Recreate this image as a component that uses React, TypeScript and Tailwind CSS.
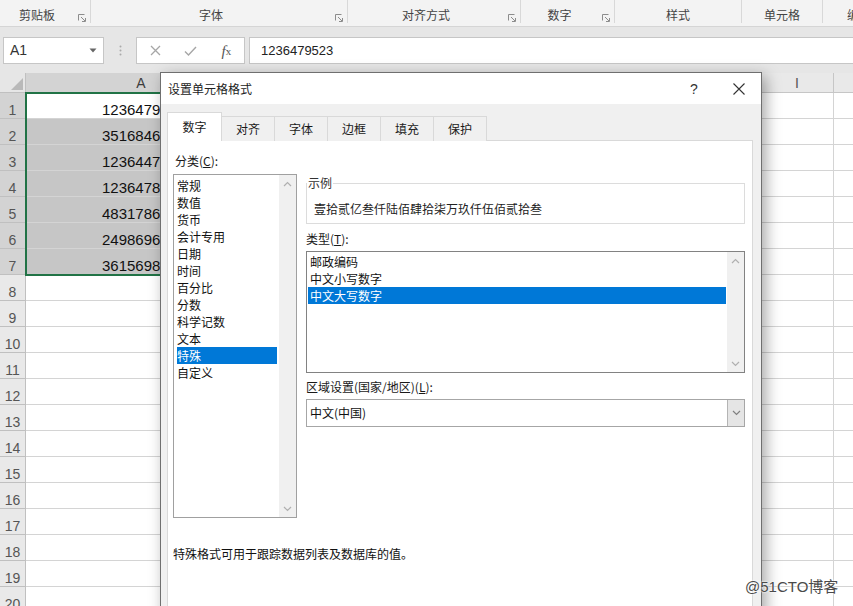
import React from "react";

const values = [
  "1236479523",
  "3516846523",
  "1236447952",
  "1236478952",
  "4831786523",
  "2498696712",
  "3615698523",
];

const categories = [
  "常规",
  "数值",
  "货币",
  "会计专用",
  "日期",
  "时间",
  "百分比",
  "分数",
  "科学记数",
  "文本",
  "特殊",
  "自定义",
];

const types = ["邮政编码", "中文小写数字", "中文大写数字"];

function Launcher() {
  return (
    <svg width="8" height="8" viewBox="0 0 8 8" className="block">
      <path d="M0.5 6.5V0.5H6.5" stroke="#8c8c8c" fill="none" strokeWidth="1" />
      <path d="M3 3L7 7" stroke="#8c8c8c" strokeWidth="1" />
      <path d="M4 7.5H7.5V4" stroke="#8c8c8c" fill="none" strokeWidth="1" />
    </svg>
  );
}

function ArrowUp() {
  return (
    <svg width="9" height="6" viewBox="0 0 9 6" className="block">
      <path d="M1 5L4.5 1.5L8 5" stroke="#b0b0b0" strokeWidth="1.2" fill="none" />
    </svg>
  );
}

function ArrowDown({ color = "#b0b0b0" }: { color?: string }) {
  return (
    <svg width="9" height="6" viewBox="0 0 9 6" className="block">
      <path d="M1 1L4.5 4.5L8 1" stroke={color} strokeWidth="1.2" fill="none" />
    </svg>
  );
}

function Scrollbar() {
  return (
    <div className="w-[17px] h-full bg-[#f0f0f0] flex flex-col justify-between items-center">
      <div className="h-[17px] flex items-center justify-center">
        <ArrowUp />
      </div>
      <div className="h-[17px] flex items-center justify-center">
        <ArrowDown />
      </div>
    </div>
  );
}

function GridRow({ n }: { n: number }) {
  const sel = n >= 1 && n <= 7;
  const v = sel ? values[n - 1] : "";
  const cellBg = n >= 2 && n <= 7 ? "bg-[#c6c6c6]" : "bg-white";
  return (
    <div className="flex h-[26px] shrink-0">
      <div
        className={
          "w-[26px] shrink-0 border-r border-b border-[#c0c0c0] flex items-end justify-center text-[14px] leading-[16px] text-[#555] font-['Liberation_Sans',sans-serif] " +
          (sel ? "bg-[#d3d3d3]" : "bg-[#e9e9e9]")
        }
      >
        {n}
      </div>
      <div
        className={
          "w-[231px] shrink-0 border-r border-b border-[#d4d4d4] flex items-end pl-[76px] text-[15px] leading-[16px] text-[#111] font-['Liberation_Sans',sans-serif] overflow-hidden whitespace-nowrap " +
          cellBg
        }
      >
        {v}
      </div>
      <div className="w-[72px] shrink-0 border-r border-b border-[#d4d4d4] bg-white" />
      <div className="w-[72px] shrink-0 border-r border-b border-[#d4d4d4] bg-white" />
      <div className="w-[72px] shrink-0 border-r border-b border-[#d4d4d4] bg-white" />
      <div className="w-[72px] shrink-0 border-r border-b border-[#d4d4d4] bg-white" />
      <div className="w-[72px] shrink-0 border-r border-b border-[#d4d4d4] bg-white" />
      <div className="w-[72px] shrink-0 border-r border-b border-[#d4d4d4] bg-white" />
      <div className="w-[72px] shrink-0 border-r border-b border-[#d4d4d4] bg-white" />
      <div className="w-[73px] shrink-0 border-r border-b border-[#d4d4d4] bg-white" />
      <div className="flex-1 border-b border-[#d4d4d4] bg-white" />
    </div>
  );
}

export default function App() {
  const rowNums = Array.from({ length: 20 }, (_, i) => i + 1);
  return (
    <div className="relative w-[853px] h-[606px] overflow-hidden bg-white font-['Noto_Sans_CJK_SC',sans-serif] flex flex-col">
      {/* Ribbon group labels */}
      <div className="h-[27px] shrink-0 bg-[#f3f3f3] border-b border-[#d5d5d5] flex items-start text-[12px] leading-[16px] text-[#444] whitespace-nowrap">
        <div className="w-[91px] h-[23px] shrink-0 border-r border-[#d8d8d8] flex items-end">
          <div className="flex-1 text-center">剪贴板</div>
          <div className="w-[16px] pl-[4px] pb-[1px]">
            <Launcher />
          </div>
        </div>
        <div className="w-[257px] h-[23px] shrink-0 border-r border-[#d8d8d8] flex items-end">
          <div className="flex-1 text-center">字体</div>
          <div className="w-[16px] pl-[4px] pb-[1px]">
            <Launcher />
          </div>
        </div>
        <div className="w-[173px] h-[23px] shrink-0 border-r border-[#d8d8d8] flex items-end">
          <div className="flex-1 text-center">对齐方式</div>
          <div className="w-[16px] pl-[4px] pb-[1px]">
            <Launcher />
          </div>
        </div>
        <div className="w-[94px] h-[23px] shrink-0 border-r border-[#d8d8d8] flex items-end">
          <div className="flex-1 text-center">数字</div>
          <div className="w-[16px] pl-[4px] pb-[1px]">
            <Launcher />
          </div>
        </div>
        <div className="w-[127px] h-[23px] shrink-0 border-r border-[#d8d8d8] flex items-end justify-center">
          样式
        </div>
        <div className="w-[81px] h-[23px] shrink-0 border-r border-[#d8d8d8] flex items-end justify-center">
          单元格
        </div>
        <div className="flex-1 h-[23px] flex items-end pl-[24px]">编辑</div>
      </div>

      {/* Formula bar */}
      <div className="h-[46px] shrink-0 bg-[#e6e6e6] flex items-start pt-[10px]">
        <div className="ml-[3px] w-[101px] h-[27px] bg-white border border-[#c6c6c6] flex items-center justify-between pl-[6px] pr-[6px]">
          <span className="text-[14px] text-[#333] font-['Liberation_Sans',sans-serif]">A1</span>
          <svg width="8" height="5" viewBox="0 0 8 5" className="block">
            <path d="M0.5 0.5H7.5L4 4.5Z" fill="#666" />
          </svg>
        </div>
        <div className="w-[32px] h-[27px] flex items-center justify-center">
          <svg width="3" height="11" viewBox="0 0 3 11" className="block">
            <circle cx="1.5" cy="1.5" r="1" fill="#aaa" />
            <circle cx="1.5" cy="5.5" r="1" fill="#aaa" />
            <circle cx="1.5" cy="9.5" r="1" fill="#aaa" />
          </svg>
        </div>
        <div className="w-[109px] h-[27px] bg-white border border-[#c6c6c6] flex items-center pl-[1px]">
          <div className="w-[36px] flex justify-center">
            <svg width="11" height="11" viewBox="0 0 11 11" className="block">
              <path d="M1 1L10 10M10 1L1 10" stroke="#a6a6a6" strokeWidth="1.3" />
            </svg>
          </div>
          <div className="w-[36px] flex justify-center">
            <svg width="13" height="10" viewBox="0 0 13 10" className="block">
              <path d="M1 5.5L4.5 9L12 1" stroke="#a6a6a6" strokeWidth="1.4" fill="none" />
            </svg>
          </div>
          <div className="w-[36px] flex justify-center text-[#555] italic font-['Liberation_Serif',serif] text-[15px] leading-[16px]">
            f<span className="text-[11px] not-italic font-['Liberation_Serif',serif] italic">x</span>
          </div>
        </div>
        <div className="ml-[4px] flex-1 h-[27px] bg-white border-y border-l border-[#c6c6c6] flex items-center pl-[11px] text-[13px] text-[#222] font-['Liberation_Sans',sans-serif]">
          1236479523
        </div>
      </div>

      {/* Grid */}
      <div className="relative flex-1 flex flex-col">
        <div className="flex h-[20px] shrink-0 text-[14px] leading-[16px] text-[#444] font-['Liberation_Sans',sans-serif]">
          <div className="w-[26px] shrink-0 bg-[#e6e6e6] border-r border-b border-[#c0c0c0] flex items-end justify-end pr-[2px] pb-[2px]">
            <svg width="12" height="12" viewBox="0 0 12 12" className="block">
              <path d="M12 0V12H0Z" fill="#b9b9b9" />
            </svg>
          </div>
          <div className="w-[231px] shrink-0 bg-[#d3d3d3] border-r border-b border-[#bdbdbd] flex items-end justify-center pb-[1px] text-[#3d3d3d]">
            A
          </div>
          <div className="w-[72px] shrink-0 bg-[#e9e9e9] border-r border-b border-[#c6c6c6] flex items-end justify-center pb-[1px]">B</div>
          <div className="w-[72px] shrink-0 bg-[#e9e9e9] border-r border-b border-[#c6c6c6] flex items-end justify-center pb-[1px]">C</div>
          <div className="w-[72px] shrink-0 bg-[#e9e9e9] border-r border-b border-[#c6c6c6] flex items-end justify-center pb-[1px]">D</div>
          <div className="w-[72px] shrink-0 bg-[#e9e9e9] border-r border-b border-[#c6c6c6] flex items-end justify-center pb-[1px]">E</div>
          <div className="w-[72px] shrink-0 bg-[#e9e9e9] border-r border-b border-[#c6c6c6] flex items-end justify-center pb-[1px]">F</div>
          <div className="w-[72px] shrink-0 bg-[#e9e9e9] border-r border-b border-[#c6c6c6] flex items-end justify-center pb-[1px]">G</div>
          <div className="w-[72px] shrink-0 bg-[#e9e9e9] border-r border-b border-[#c6c6c6] flex items-end justify-center pb-[1px]">H</div>
          <div className="w-[73px] shrink-0 bg-[#e9e9e9] border-r border-b border-[#c6c6c6] flex items-end justify-center pb-[1px] text-[#555]">I</div>
          <div className="flex-1 bg-[#e9e9e9] border-b border-[#c6c6c6]" />
        </div>
        {rowNums.map((n) => (
          <GridRow key={n} n={n} />
        ))}
        {/* selection border */}
        <div className="absolute left-[25px] top-[19px] w-[234px] h-[184px] border-2 border-[#217346] pointer-events-none" />
      </div>

      {/* Dialog */}
      <div className="absolute left-[160px] top-[72px] w-[602px] h-[545px] border border-[#6f6f6f] bg-[#f0f0f0] shadow-[4px_4px_14px_rgba(0,0,0,0.35)] flex flex-col text-[12px] text-[#1a1a1a]">
        <div className="h-[31px] shrink-0 bg-white flex items-center pl-[7px] leading-[16px]">
          <span className="text-[#222]">设置单元格格式</span>
          <div className="ml-auto flex items-center mr-[12px]">
            <span className="w-[20px] text-center text-[14px] text-[#333] font-['Liberation_Sans',sans-serif]">?</span>
            <div className="w-[20px] ml-[25px] flex justify-center">
              <svg width="12" height="12" viewBox="0 0 12 12" className="block">
                <path d="M0.5 0.5L11.5 11.5M11.5 0.5L0.5 11.5" stroke="#333" strokeWidth="1.1" />
              </svg>
            </div>
          </div>
        </div>
        <div className="flex-1 flex flex-col px-[6px] pt-[8px]">
          {/* tabs */}
          <div className="flex items-end h-[29px] shrink-0 relative z-10 leading-[16px]">
            <div className="w-[55px] h-[29px] bg-white border border-[#d9d9d9] border-b-0 flex items-center justify-center">数字</div>
            <div className="w-[53px] h-[25px] bg-[#f0f0f0] border-t border-r border-[#d9d9d9] flex items-center justify-center">对齐</div>
            <div className="w-[53px] h-[25px] bg-[#f0f0f0] border-t border-r border-[#d9d9d9] flex items-center justify-center">字体</div>
            <div className="w-[53px] h-[25px] bg-[#f0f0f0] border-t border-r border-[#d9d9d9] flex items-center justify-center">边框</div>
            <div className="w-[53px] h-[25px] bg-[#f0f0f0] border-t border-r border-[#d9d9d9] flex items-center justify-center">填充</div>
            <div className="w-[53px] h-[25px] bg-[#f0f0f0] border-t border-r border-[#d9d9d9] flex items-center justify-center">保护</div>
          </div>
          {/* panel */}
          <div className="-mt-px w-[586px] flex-1 bg-white border border-[#d9d9d9] px-[5px] pt-[11px] leading-[17px]">
            <div className="flex">
              {/* left column */}
              <div className="w-[124px] shrink-0 flex flex-col">
                <div className="h-[18px] leading-[18px] pl-[2px]">
                  分类(<span className="underline">C</span>):
                </div>
                <div className="mt-[4px] h-[344px] border border-[#a0a0a0] flex">
                  <div className="flex-1 pl-[3px] pr-[2px] pt-[2px] flex flex-col">
                    {categories.map((c) => (
                      <div
                        key={c}
                        className={
                          "h-[17px] leading-[17px] whitespace-nowrap " +
                          (c === "特殊" ? "bg-[#0078d7] text-white" : "text-[#111]")
                        }
                      >
                        {c}
                      </div>
                    ))}
                  </div>
                  <Scrollbar />
                </div>
              </div>
              {/* right column */}
              <div className="ml-[9px] w-[439px] flex flex-col">
                <div className="mt-[31px] h-[41px] relative border border-[#dcdcdc] pl-[7px] pt-[17px] leading-[16px]">
                  <span className="absolute -top-[9px] left-0 bg-white px-[1px] text-[#333] leading-[16px]">示例</span>
                  <span className="text-[#222]">壹拾贰亿叁仟陆佰肆拾柒万玖仟伍佰贰拾叁</span>
                </div>
                <div className="mt-[6px] h-[18px] leading-[18px]">
                  类型(<span className="underline">T</span>):
                </div>
                <div className="mt-[3px] h-[122px] border border-[#828282] flex">
                  <div className="flex-1 pl-[1px] pr-[1px] pt-[1px] flex flex-col">
                    {types.map((t) => (
                      <div
                        key={t}
                        className={
                          "h-[17px] leading-[17px] pl-[2px] whitespace-nowrap " +
                          (t === "中文大写数字" ? "bg-[#0078d7] text-white" : "text-[#111]")
                        }
                      >
                        {t}
                      </div>
                    ))}
                  </div>
                  <Scrollbar />
                </div>
                <div className="mt-[5px] h-[18px] leading-[18px]">
                  区域设置(国家/地区)(<span className="underline">L</span>):
                </div>
                <div className="mt-[3px] h-[28px] border border-[#a6a6a6] flex items-center bg-white">
                  <span className="flex-1 pl-[3px] leading-[16px] text-[#111]">中文(中国)</span>
                  <div className="w-[17px] h-full bg-[#e5e5e5] border-l border-[#b4b4b4] flex items-center justify-center">
                    <ArrowDown color="#808080" />
                  </div>
                </div>
              </div>
            </div>
            <div className="mt-[28px] leading-[16px] text-[#111]">特殊格式可用于跟踪数据列表及数据库的值。</div>
          </div>
        </div>
      </div>

      {/* watermark */}
      <div className="absolute left-[745px] top-[578px] text-[15px] leading-[18px] text-[#4a4a4a] font-['Liberation_Sans','Noto_Sans_CJK_SC',sans-serif] [text-shadow:0_0_2px_#fff,0_0_2px_#fff]">
        @51CTO博客
      </div>
    </div>
  );
}
